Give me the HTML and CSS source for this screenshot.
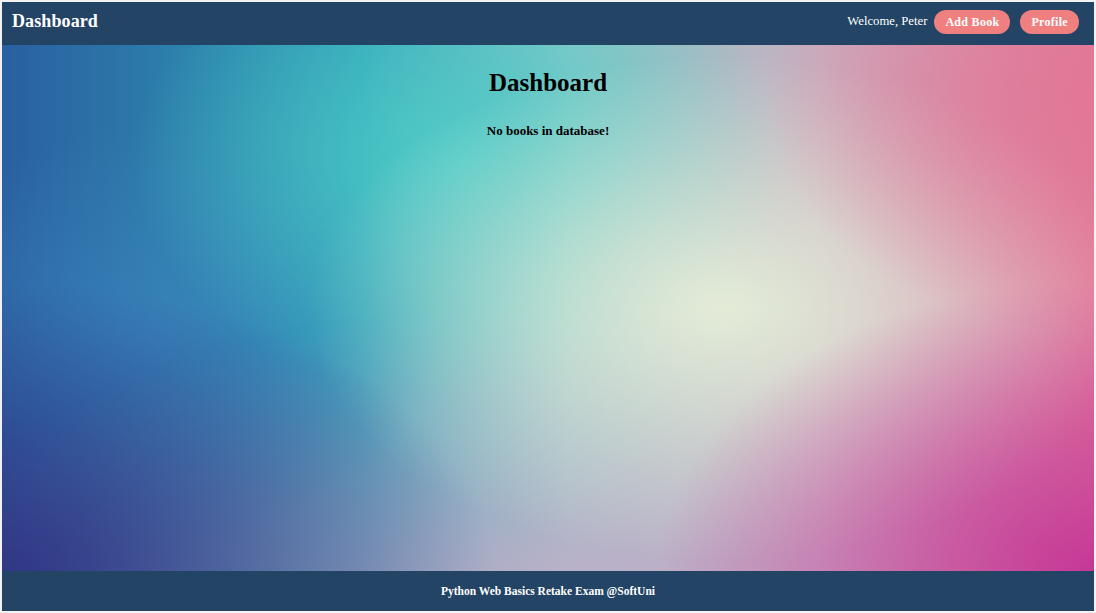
FILE: index.html
```html
<!DOCTYPE html>
<html lang="en">
<head>
<meta charset="utf-8">
<title>Dashboard</title>
<link rel="stylesheet" href="styles.css">
</head>
<body>
<div class="frame">
  <header class="topbar">
    <h1 class="brand">Dashboard</h1>
    <nav class="nav">
      <span class="welcome">Welcome, Peter</span>
      <a class="btn" href="#">Add Book</a>
      <a class="btn" href="#">Profile</a>
    </nav>
  </header>
  <main class="content">
    <h2 class="title">Dashboard</h2>
    <p class="empty">No books in database!</p>
  </main>
  <footer class="footer">Python Web Basics Retake Exam @SoftUni</footer>
</div>
</body>
</html>
```
FILE: styles.css
```css
html, body {
  margin: 0;
  padding: 0;
  height: 100%;
  background: #f2f2f2;
}
body {
  padding: 2px;
  box-sizing: border-box;
  font-family: "Liberation Serif", "Times New Roman", serif;
}
.frame {
  height: 100%;
  display: flex;
  flex-direction: column;
}
.topbar {
  height: 43px;
  box-sizing: border-box;
  flex: none;
  background: #234465;
  display: flex;
  align-items: center;
  justify-content: space-between;
  padding: 0 15px 4px 10px;
}
.brand {
  margin: 0;
  color: #ffffff;
  font-size: 18px;
  font-weight: bold;
  letter-spacing: 0.1px;
}
.nav {
  display: flex;
  align-items: center;
}
.welcome {
  color: #ffffff;
  font-size: 12.7px;
  margin-right: 7px;
}
.btn {
  display: inline-block;
  background: #f08080;
  color: #ffffff;
  text-decoration: none;
  font-weight: bold;
  font-size: 12px;
  letter-spacing: 0.3px;
  height: 24px;
  line-height: 24px;
  padding: 0 11px;
  border-radius: 12px;
  margin-left: 10px;
}
.welcome + .btn { margin-left: 0; }
.content {
  flex: 1;
  text-align: center;
  background:
    radial-gradient(ellipse 45% 55% at 0% 100%, rgba(48,52,132,0.95), rgba(48,52,132,0) 100%),
    radial-gradient(ellipse 40% 55% at 100% 100%, rgba(196,52,150,0.95), rgba(196,52,150,0) 100%),
    radial-gradient(ellipse 30% 45% at 100% 10%, rgba(226,118,150,0.85), rgba(226,118,150,0) 100%),
    radial-gradient(ellipse 38% 48% at 66% 50%, rgba(228,236,216,1), rgba(228,236,216,0) 100%),
    radial-gradient(ellipse 30% 45% at 42% 22%, rgba(80,206,200,0.9), rgba(80,206,200,0) 100%),
    radial-gradient(ellipse 25% 40% at 15% 55%, rgba(60,130,190,0.7), rgba(60,130,190,0) 100%),
    radial-gradient(ellipse 60% 60% at 50% 110%, rgba(200,170,200,0.9), rgba(200,170,200,0) 100%),
    linear-gradient(90deg, #2a5fa0 0%, #2fa2b8 33%, #8cc6c8 52%, #c8b0c0 75%, #e27c9c 100%);
}
.title {
  margin: 24px 0 0;
  font-size: 25px;
  font-weight: bold;
  color: #000;
}
.empty {
  margin: 26px 0 0;
  font-size: 13px;
  font-weight: bold;
  color: #000;
}
.footer {
  height: 40px;
  flex: none;
  background: #234465;
  color: #ffffff;
  font-size: 11.5px;
  font-weight: bold;
  display: flex;
  align-items: center;
  justify-content: center;
}
```
